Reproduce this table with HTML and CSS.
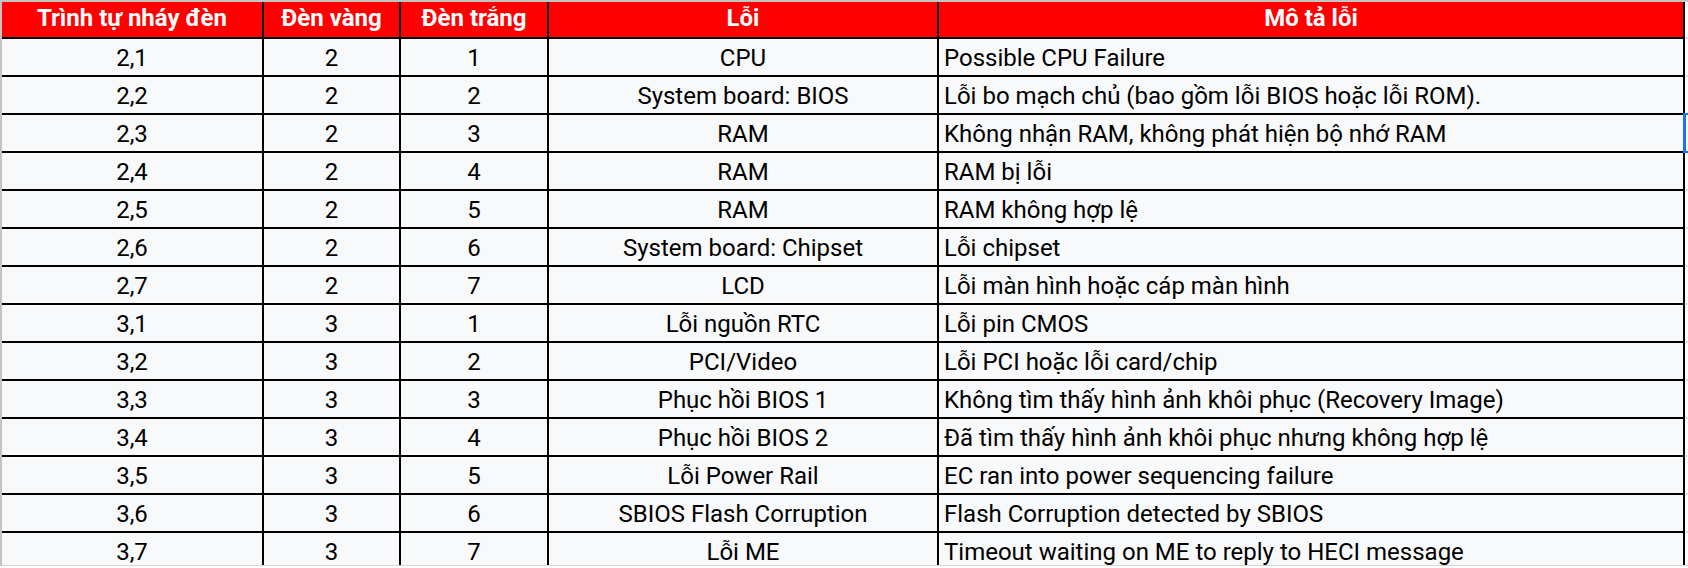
FILE: index.html
```html
<!DOCTYPE html>
<html lang="vi">
<head>
<meta charset="utf-8">
<title>Bảng mã lỗi đèn</title>
<link rel="stylesheet" href="styles.css">
</head>
<body>
<div class="sheet">
  <table class="grid">
    <colgroup>
      <col class="c1"><col class="c2"><col class="c3"><col class="c4"><col class="c5"><col class="c6">
    </colgroup>
    <thead>
      <tr>
        <th>Trình tự nháy đèn</th>
        <th>Đèn vàng</th>
        <th>Đèn trắng</th>
        <th>Lỗi</th>
        <th>Mô tả lỗi</th>
        <th class="gap"></th>
      </tr>
    </thead>
    <tbody>
      <tr><td>2,1</td><td>2</td><td>1</td><td>CPU</td><td class="desc">Possible CPU Failure</td><td class="gap"></td></tr>
      <tr><td>2,2</td><td>2</td><td>2</td><td>System board: BIOS</td><td class="desc">Lỗi bo mạch chủ (bao gồm lỗi BIOS hoặc lỗi ROM).</td><td class="gap"></td></tr>
      <tr><td>2,3</td><td>2</td><td>3</td><td>RAM</td><td class="desc">Không nhận RAM, không phát hiện bộ nhớ RAM</td><td class="gap"></td></tr>
      <tr><td>2,4</td><td>2</td><td>4</td><td>RAM</td><td class="desc">RAM bị lỗi</td><td class="gap"></td></tr>
      <tr><td>2,5</td><td>2</td><td>5</td><td>RAM</td><td class="desc">RAM không hợp lệ</td><td class="gap"></td></tr>
      <tr><td>2,6</td><td>2</td><td>6</td><td>System board: Chipset</td><td class="desc">Lỗi chipset</td><td class="gap"></td></tr>
      <tr><td>2,7</td><td>2</td><td>7</td><td>LCD</td><td class="desc">Lỗi màn hình hoặc cáp màn hình</td><td class="gap"></td></tr>
      <tr><td>3,1</td><td>3</td><td>1</td><td>Lỗi nguồn RTC</td><td class="desc">Lỗi pin CMOS</td><td class="gap"></td></tr>
      <tr><td>3,2</td><td>3</td><td>2</td><td>PCI/Video</td><td class="desc">Lỗi PCI hoặc lỗi card/chip</td><td class="gap"></td></tr>
      <tr><td>3,3</td><td>3</td><td>3</td><td>Phục hồi BIOS 1</td><td class="desc">Không tìm thấy hình ảnh khôi phục (Recovery Image)</td><td class="gap"></td></tr>
      <tr><td>3,4</td><td>3</td><td>4</td><td>Phục hồi BIOS 2</td><td class="desc">Đã tìm thấy hình ảnh khôi phục nhưng không hợp lệ</td><td class="gap"></td></tr>
      <tr><td>3,5</td><td>3</td><td>5</td><td>Lỗi Power Rail</td><td class="desc">EC ran into power sequencing failure</td><td class="gap"></td></tr>
      <tr><td>3,6</td><td>3</td><td>6</td><td>SBIOS Flash Corruption</td><td class="desc">Flash Corruption detected by SBIOS</td><td class="gap"></td></tr>
      <tr><td>3,7</td><td>3</td><td>7</td><td>Lỗi ME</td><td class="desc">Timeout waiting on ME to reply to HECI message</td><td class="gap"></td></tr>
    </tbody>
  </table>
  <div class="selection"></div>
</div>
</body>
</html>
```

FILE: styles.css
```css
* { box-sizing: border-box; }

html, body {
  margin: 0;
  padding: 0;
  background: #ffffff;
}

body {
  font-family: Roboto, "Noto Sans", "Liberation Sans", sans-serif;
  color: #000000;
}

.sheet {
  position: relative;
  width: 1688px;
  height: 566px;
  overflow: hidden;
  border-top: 2px solid #c4c4c4;
  border-left: 2px solid #c4c4c4;
  border-bottom: 1px solid #d6d6d6;
}

.grid {
  table-layout: fixed;
  border-collapse: separate;
  border-spacing: 0;
  width: 1686px;
}

.c1 { width: 262px; }
.c2 { width: 137px; }
.c3 { width: 148px; }
.c4 { width: 390px; }
.c5 { width: 746px; }
.c6 { width: 3px; }

.grid th,
.grid td {
  border-right: 2px solid #000;
  border-bottom: 2px solid #000;
  text-align: center;
  padding: 0 5px;
  white-space: nowrap;
  overflow: hidden;
}

.grid th {
  height: 37px;
  background: #ff0000;
  color: #ffffff;
  font-size: 24px;
  font-weight: 700;
  line-height: 28px;
  padding-bottom: 3px;
}

.grid td {
  height: 38px;
  background: #f8f9fa;
  font-size: 24px;
  font-weight: 400;
  line-height: 28px;
  padding-top: 1px;
}

.grid td.desc {
  text-align: left;
}

.grid .gap {
  background: #ffffff;
  border-right: none;
  border-bottom: 2px solid #e3e3e3;
  padding: 0;
}

.selection {
  position: absolute;
  left: 1681px;
  top: 111px;
  width: 6px;
  height: 40px;
  border-left: 3px solid #1a73e8;
  border-top: 2px solid #1a73e8;
  border-bottom: 2px solid #1a73e8;
}
```
